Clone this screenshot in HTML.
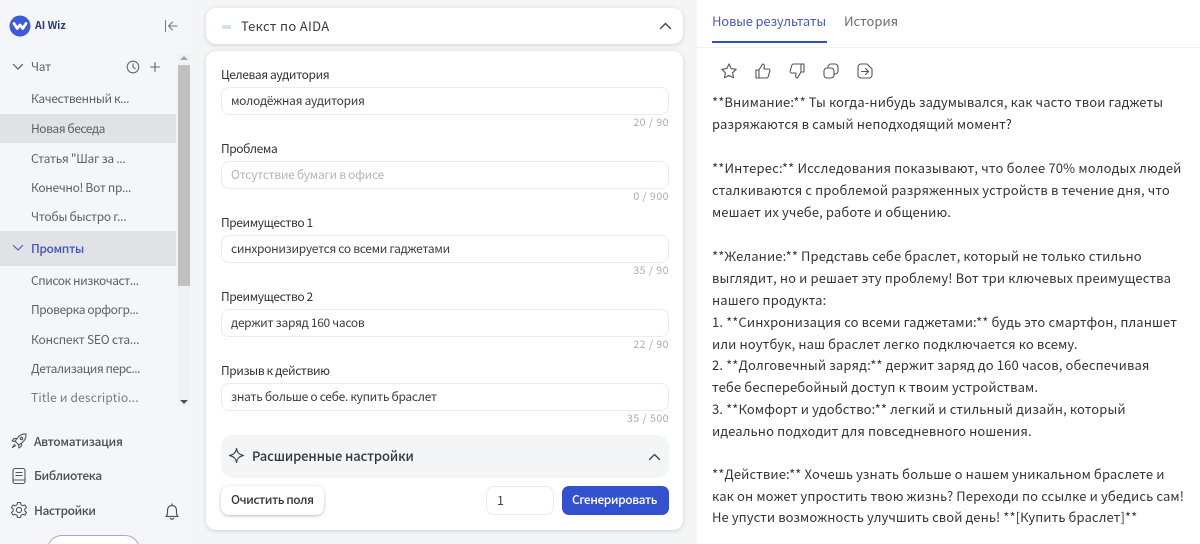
<!DOCTYPE html>
<html lang="ru"><head><meta charset="utf-8"><title>AI Wiz</title>
<style>
*{box-sizing:border-box}
html,body{margin:0;padding:0;width:1200px;height:544px;overflow:hidden}
#w{position:relative;width:1200px;height:544px;overflow:hidden;background:#f3f5f6;font-family:"Noto Sans CJK JP","Liberation Sans",sans-serif;color:#333}
.t{position:absolute;white-space:nowrap;line-height:20px}
.a{position:absolute}
.side{position:absolute;left:0;top:0;width:193px;height:544px;background:#f5f6f9}
.s{font-size:12px;color:#5d5f66;left:31px;letter-spacing:-.4px;margin-top:1px}
.m{font-size:12px;color:#4b4d55;left:34px;letter-spacing:-.3px;font-weight:500;margin-top:1px}
.card{position:absolute;background:#fff;border-radius:10px;box-shadow:0 1px 4px rgba(70,80,120,.22)}
.lab{font-size:12px;color:#333038;left:221px;letter-spacing:-.4px;margin-top:1px}
.inp{position:absolute;left:221px;width:448px;height:28px;border:1px solid #e9ebef;border-radius:8px;background:#fff}
.val{font-size:12px;color:#3b3b42;left:231px;letter-spacing:-.3px;margin-top:1px}
.cnt{font-size:10.5px;color:#a9abb0;right:531px;letter-spacing:.5px}
.r{font-size:13px;color:#34343c;left:712px;letter-spacing:.12px;line-height:22px;margin-top:1px}
svg{position:absolute;fill:none;stroke-linecap:round;stroke-linejoin:round}
</style></head><body><div id="w">
<div class="side"></div>
<div class="a" style="left:0;top:114px;width:176px;height:29px;background:#e1e2e5"></div>
<div class="a" style="left:0;top:231px;width:176px;height:35px;background:#e1e2e5"></div>
<div class="a" style="left:177px;top:54px;width:14px;height:352px;background:#f1f2f4"></div>
<div class="a" style="left:178px;top:65px;width:12px;height:221px;background:#c1c1c1"></div>
<div class="a" style="left:180px;top:56px;width:0;height:0;border:4px solid transparent;border-top:0;border-bottom:4px solid #a3a3a3"></div>
<div class="a" style="left:180px;top:400px;width:0;height:0;border:4px solid transparent;border-bottom:0;border-top:4px solid #505050"></div>

<svg style="left:9px;top:15px" width="22" height="22" viewBox="0 0 22 22"><circle cx="11" cy="11" r="10.5" fill="#3d5bd9"/><path d="M5 8.500l3.200 5 2.800-3.500 2.800 3.500 3.200-5" stroke="#fff" stroke-width="2.800"/></svg>
<div class="t" style="left:35px;top:16px;font-size:10.500px;font-weight:700;color:#2b3a78">AI Wiz</div>
<svg style="left:164px;top:19px" width="14" height="14" viewBox="0 0 14 14" stroke="#777"><path d="M1.500 1.500v11M13 7H4.500M8.500 3L4.500 7l4 4"/></svg>

<svg style="left:12px;top:62px" width="12" height="10" viewBox="0 0 12 10" stroke="#555" stroke-width="1.200"><path d="M1.500 2.500L6 7l4.500-4.500"/></svg>
<div class="t s" style="top:56px;letter-spacing:-.3px">Чат</div>
<svg style="left:126px;top:60px" width="14" height="14" viewBox="0 0 14 14" stroke="#666" stroke-width="1.100"><circle cx="7" cy="7" r="5.800"/><path d="M7 3.800V7l2.200 1.800"/></svg>
<svg style="left:149px;top:61px" width="12" height="12" viewBox="0 0 12 12" stroke="#666" stroke-width="1.100"><path d="M6 1.500v9M1.500 6h9"/></svg>
<div class="t s" style="top:88px;letter-spacing:-.39px">Качественный к...</div>
<div class="t s" style="top:118px;letter-spacing:-.46px">Новая беседа</div>
<div class="t s" style="top:148px;letter-spacing:-.3px">Статья "Шаг за ...</div>
<div class="t s" style="top:177px;letter-spacing:-.33px">Конечно! Вот пр...</div>
<div class="t s" style="top:206px;letter-spacing:-.3px">Чтобы быстро г...</div>
<svg style="left:12px;top:243px" width="12" height="10" viewBox="0 0 12 10" stroke="#4a57c4" stroke-width="1.200"><path d="M1.500 2.500L6 7l4.500-4.500"/></svg>
<div class="t s" style="top:238px;color:#4054c0;font-weight:500">Промпты</div>
<div class="t s" style="top:270px;letter-spacing:-.44px">Список низкочаст...</div>
<div class="t s" style="top:299px;letter-spacing:-.43px">Проверка орфогр...</div>
<div class="t s" style="top:329px;letter-spacing:-.22px">Конспект SEO ста...</div>
<div class="t s" style="top:358px;letter-spacing:-.45px">Детализация перс...</div>
<div class="t s" style="top:387px;letter-spacing:.18px;color:#77797f">Title и descriptio...</div>

<svg style="left:10px;top:432px" width="18" height="18" viewBox="0 0 18 18" stroke="#555" stroke-width="1.100"><path d="M7 6.500C9 3.500 12 1.800 16 2c.2 4-1.500 7-4.500 9L9 13l-4-4zM7 6.500H4L2 9l3 .5M11.500 11v3L9 16l-.5-3M4.500 12.500L2.500 15.500 5.500 13.500"/><circle cx="11.500" cy="6.500" r="1.200"/></svg>
<div class="t m" style="top:431px">Автоматизация</div>
<svg style="left:11px;top:467px" width="16" height="18" viewBox="0 0 16 18" stroke="#555" stroke-width="1.100"><rect x="2" y="1.500" width="12" height="15" rx="2"/><path d="M5 5.500h6M5 8.500h6M2 13h12"/></svg>
<div class="t m" style="top:465px;letter-spacing:-.4px">Библиотека</div>
<svg style="left:10px;top:501px" width="18" height="18" viewBox="0 0 18 18" stroke="#555" stroke-width="1.100"><path d="M7.500 1.500h3l.5 2.200 1.800 1 2.200-.7 1.500 2.600-1.700 1.500v1.800l1.700 1.500-1.500 2.600-2.200-.7-1.800 1-.5 2.200h-3L7 14.300l-1.800-1-2.200.7-1.500-2.600 1.700-1.500V8.100L1.500 6.600 3 4l2.200.7 1.800-1z"/><circle cx="9" cy="9" r="2.600"/></svg>
<div class="t m" style="top:500px;letter-spacing:-.44px">Настройки</div>
<svg style="left:164px;top:503px" width="16" height="18" viewBox="0 0 16 18" stroke="#555" stroke-width="1.200"><path d="M2 13.500c1-1 1.500-2 1.500-4V7a4.500 4.500 0 0 1 9 0v2.500c0 2 .5 3 1.500 4zM6.500 15.500c.8 1 2.200 1 3 0M8 1v1.500"/></svg>
<div class="a" style="left:47px;top:535px;width:93px;height:30px;border:1px solid #b79be0;border-radius:15px;background:#fff"></div>

<div class="card" style="left:206px;top:8px;width:477px;height:36px"></div>
<div class="a" style="left:222px;top:25px;width:9px;height:4px;background:#cfe3df;border-radius:1px"></div>
<div class="t" style="left:241px;top:16px;font-size:13px;color:#3a3a40;letter-spacing:.32px">Текст по AIDA</div>
<svg style="left:659px;top:21px" width="13" height="10" viewBox="0 0 13 10" stroke="#444" stroke-width="1.400"><path d="M1.500 7.500l5-5 5 5"/></svg>

<div class="card" style="left:206px;top:51px;width:477px;height:479px"></div>
<div class="t lab" style="top:64px">Целевая аудитория</div>
<div class="inp" style="top:87px"></div>
<div class="t val" style="top:90px">молодёжная аудитория</div>
<div class="t cnt" style="top:113px">20 / 90</div>

<div class="t lab" style="top:138px">Проблема</div>
<div class="inp" style="top:161px"></div>
<div class="t val" style="top:164px;color:#b4b5ba">Отсутствие бумаги в офисе</div>
<div class="t cnt" style="top:187px">0 / 900</div>

<div class="t lab" style="top:212px">Преимущество 1</div>
<div class="inp" style="top:235px"></div>
<div class="t val" style="top:238px">синхронизируется со всеми гаджетами</div>
<div class="t cnt" style="top:261px">35 / 90</div>

<div class="t lab" style="top:286px">Преимущество 2</div>
<div class="inp" style="top:309px"></div>
<div class="t val" style="top:312px">держит заряд 160 часов</div>
<div class="t cnt" style="top:335px">22 / 90</div>

<div class="t lab" style="top:360px">Призыв к действию</div>
<div class="inp" style="top:383px"></div>
<div class="t val" style="top:386px">знать больше о себе. купить браслет</div>
<div class="t cnt" style="top:409px">35 / 500</div>

<div class="a" style="left:221px;top:435px;width:448px;height:43px;background:#f3f5f7;border-radius:12px"></div>
<svg style="left:228px;top:447px" width="17" height="17" viewBox="0 0 17 17" stroke="#444" stroke-width="1.200"><path d="M8.500 1.500c.7 4 2.500 6 7 7-4.500 1-6.300 3-7 7-.7-4-2.500-6-7-7 4.500-1 6.300-3 7-7z"/></svg>
<div class="t" style="left:252px;top:446px;font-size:13px;font-weight:500;color:#33343a;letter-spacing:-.1px">Расширенные настройки</div>
<svg style="left:648px;top:452px" width="13" height="10" viewBox="0 0 13 10" stroke="#444" stroke-width="1.300"><path d="M1.500 7.500l5-5 5 5"/></svg>

<div class="a" style="left:221px;top:486px;width:103px;height:29px;background:#fff;border-radius:8px;box-shadow:0 1px 3px rgba(60,70,100,.35)"></div>
<div class="t" style="left:231px;top:490px;font-size:12px;font-weight:500;color:#35353b;letter-spacing:-.5px">Очистить поля</div>
<div class="a" style="left:486px;top:486px;width:68px;height:29px;background:#fff;border:1px solid #e9ebef;border-radius:8px"></div>
<div class="t" style="left:497px;top:490px;font-size:12.500px;color:#444">1</div>
<div class="a" style="left:562px;top:486px;width:107px;height:29px;background:#3350cf;border-radius:7px"></div>
<div class="t" style="left:572px;top:490px;font-size:12px;font-weight:500;color:#fff;letter-spacing:-.46px">Сгенерировать</div>

<div class="a" style="left:697px;top:0;width:503px;height:544px;background:#fff"></div>
<div class="a" style="left:697px;top:47px;width:503px;height:1px;background:#eef0f2"></div>
<div class="t" style="left:712px;top:11px;font-size:13px;color:#4c5cb4;letter-spacing:-.18px">Новые результаты</div>
<div class="t" style="left:844px;top:11px;font-size:13px;color:#6a6c72">История</div>
<div class="a" style="left:712px;top:41px;width:115px;height:2px;background:#3350c0"></div>

<svg style="left:720px;top:62px" width="18" height="18" viewBox="0 0 18 18" stroke="#555" stroke-width="1.100"><path d="M9 2l2.200 4.600 5 .7-3.600 3.500.9 5L9 13.400l-4.500 2.400.9-5-3.600-3.500 5-.7z"/></svg>
<svg style="left:754px;top:62px" width="18" height="18" viewBox="0 0 18 18" stroke="#555" stroke-width="1.100"><path d="M2 8h3v8H2zM5 8l3.500-6c1.500 0 2 1 1.800 2.200L10 7h4.500c1 0 1.600 1 1.300 2l-1.500 5.500c-.3 1-1 1.500-2 1.500H5"/></svg>
<svg style="left:788px;top:62px" width="18" height="18" viewBox="0 0 18 18" stroke="#555" stroke-width="1.100"><path d="M16 10h-3V2h3zM13 10l-3.500 6c-1.500 0-2-1-1.800-2.200L8 11H3.500c-1 0-1.600-1-1.300-2l1.500-5.500C4 2.500 4.700 2 5.700 2H13"/></svg>
<svg style="left:822px;top:62px" width="18" height="18" viewBox="0 0 18 18" stroke="#555" stroke-width="1.100"><rect x="2" y="6" width="10" height="10" rx="3"/><path d="M6 6V5a3 3 0 0 1 3-3h4a3 3 0 0 1 3 3v4a3 3 0 0 1-3 3h-1"/></svg>
<svg style="left:856px;top:62px" width="18" height="18" viewBox="0 0 18 18" stroke="#555" stroke-width="1.100"><path d="M5 2h6l5 5v6a3 3 0 0 1-3 3H5a3 3 0 0 1-3-3V5a3 3 0 0 1 3-3zM5.500 9.500h7M9.500 6.500l3 3-3 3"/></svg>

<div class="t r" style="top:90px">**Внимание:** Ты когда-нибудь задумывался, как часто твои гаджеты</div>
<div class="t r" style="top:112px">разряжаются в самый неподходящий момент?</div>
<div class="t r" style="top:156px;letter-spacing:.16px">**Интерес:** Исследования показывают, что более 70% молодых людей</div>
<div class="t r" style="top:178px">сталкиваются с проблемой разряженных устройств в течение дня, что</div>
<div class="t r" style="top:200px">мешает их учебе, работе и общению.</div>
<div class="t r" style="top:244px">**Желание:** Представь себе браслет, который не только стильно</div>
<div class="t r" style="top:266px">выглядит, но и решает эту проблему! Вот три ключевых преимущества</div>
<div class="t r" style="top:288px">нашего продукта:</div>
<div class="t r" style="top:310px">1. **Синхронизация со всеми гаджетами:** будь это смартфон, планшет</div>
<div class="t r" style="top:332px">или ноутбук, наш браслет легко подключается ко всему.</div>
<div class="t r" style="top:353px">2. **Долговечный заряд:** держит заряд до 160 часов, обеспечивая</div>
<div class="t r" style="top:375px">тебе бесперебойный доступ к твоим устройствам.</div>
<div class="t r" style="top:397px">3. **Комфорт и удобство:** легкий и стильный дизайн, который</div>
<div class="t r" style="top:419px">идеально подходит для повседневного ношения.</div>
<div class="t r" style="top:462px">**Действие:** Хочешь узнать больше о нашем уникальном браслете и</div>
<div class="t r" style="top:484px">как он может упростить твою жизнь? Переходи по ссылке и убедись сам!</div>
<div class="t r" style="top:505px;letter-spacing:.08px">Не упусти возможность улучшить свой день! **[Купить браслет]**</div>
</div></body></html>
